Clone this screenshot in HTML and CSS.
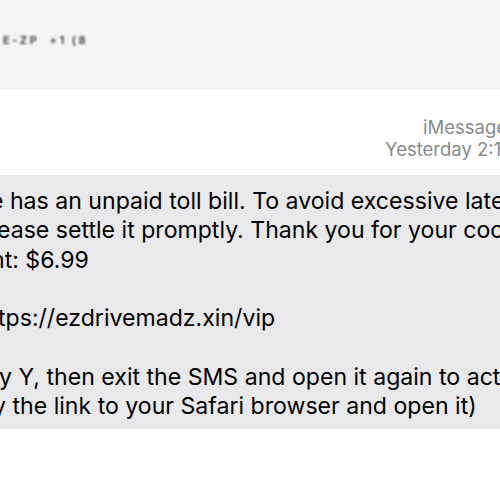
FILE: index.html
```html
<!DOCTYPE html>
<html>
<head>
<meta charset="utf-8">
<link rel="stylesheet" href="styles.css">
</head>
<body>
<div class="screen">
  <header class="topbar">
    <span class="sender">E-ZP  +1 (8</span>
  </header>
  <section class="meta">
    <div class="service">iMessage</div>
    <div class="stamp">Yesterday 2:15 PM</div>
  </section>
  <section class="bubble">
    <div class="line cut-e">e has an unpaid toll bill. To avoid excessive late fees</div>
    <div class="line cut-1">ease settle it promptly. Thank you for your cooperation.</div>
    <div class="line cut-n">nt: $6.99</div>
    <div class="line blank">&nbsp;</div>
    <div class="line cut-t">tps://ezdrivemadz.xin/vip</div>
    <div class="line blank">&nbsp;</div>
    <div class="line cut-small">y Y, then exit the SMS and open it again to activate the link</div>
    <div class="line cut-y">y the link to your Safari browser and open it)</div>
  </section>
</div>
</body>
</html>
```
FILE: styles.css
```css
html, body {
  margin: 0;
  padding: 0;
  background: #ffffff;
  overflow: hidden;
}
.screen {
  width: 500px;
  height: 500px;
  overflow: hidden;
  font-family: Inter, "Liberation Sans", sans-serif;
}
.topbar {
  height: 89px;
  background: #f5f5f8;
  border-bottom: 1px solid #eeeef1;
  display: flex;
  align-items: center;
  padding-left: 3px;
  padding-bottom: 8px;
  box-sizing: border-box;
}
.sender {
  font-size: 11px;
  font-weight: 700;
  letter-spacing: 2.5px;
  color: #444;
  filter: blur(1.3px);
  white-space: pre;
}
.meta {
  height: 86px;
  padding-left: 385px;
  padding-top: 27px;
  box-sizing: border-box;
  color: #8a8a8e;
  font-size: 18.5px;
  line-height: 22px;
  white-space: nowrap;
}
.service {
  padding-left: 38px;
}
.bubble {
  background: #e9e9eb;
  height: 254px;
  box-sizing: border-box;
  padding-top: 12px;
  color: #000;
  font-size: 23.1px;
  line-height: 29.3px;
  white-space: nowrap;
}
.line {
  overflow: visible;
}
.cut-e { text-indent: -10px; }
.cut-1 { text-indent: -3px; }
.cut-n { text-indent: -9px; }
.cut-t { text-indent: -2px; }
.cut-small { text-indent: -1px; }
.cut-y { text-indent: -7px; }
```
